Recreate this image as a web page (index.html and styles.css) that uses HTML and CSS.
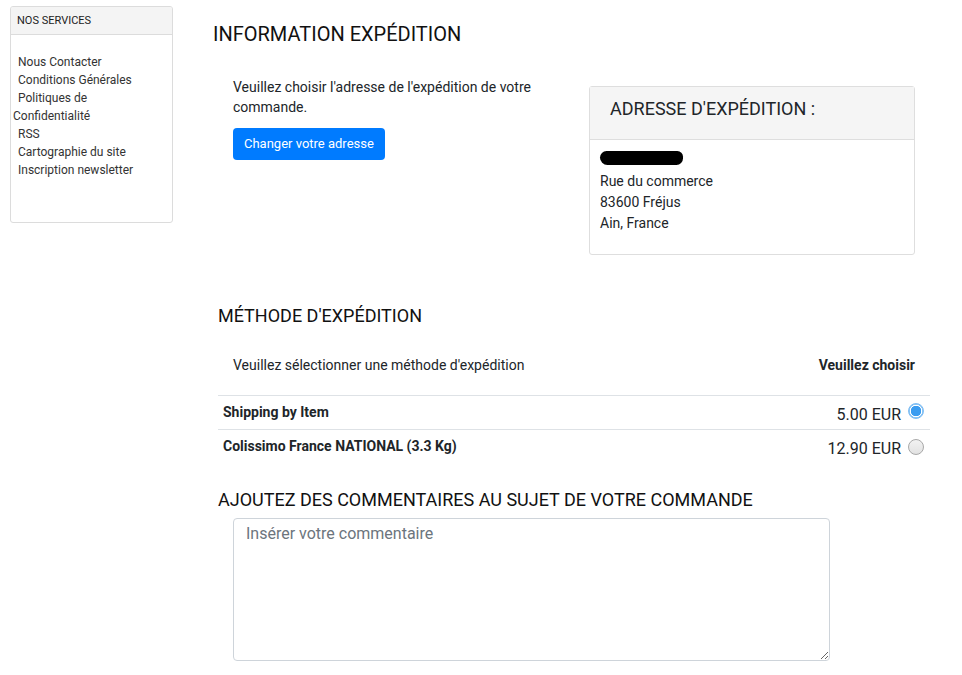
FILE: index.html
```html
<!DOCTYPE html>
<html lang="fr">
<head>
<meta charset="utf-8">
<title>Information expédition</title>
<link rel="stylesheet" href="styles.css">
</head>
<body>
<div class="page">
  <aside class="sidebar">
    <div class="side-card">
      <div class="side-head">NOS SERVICES</div>
      <ul class="side-list">
        <li><a href="#">Nous Contacter</a></li>
        <li><a href="#">Conditions Générales</a></li>
        <li><a href="#">Politiques de Confidentialité</a></li>
        <li><a href="#">RSS</a></li>
        <li><a href="#">Cartographie du site</a></li>
        <li><a href="#">Inscription newsletter</a></li>
      </ul>
    </div>
  </aside>
  <main class="main">
    <h2 class="title-lg">INFORMATION EXPÉDITION</h2>
    <div class="addr-row">
      <div class="addr-left">
        <p class="addr-text">Veuillez choisir l'adresse de l'expédition de votre commande.</p>
        <button class="btn" type="button">Changer votre adresse</button>
      </div>
      <div class="addr-card">
        <div class="addr-head">ADRESSE D'EXPÉDITION :</div>
        <div class="addr-body">
          <span class="redacted"></span>
          <div>Rue du commerce</div>
          <div>83600 Fréjus</div>
          <div>Ain, France</div>
        </div>
      </div>
    </div>

    <h3 class="title-md method-title">MÉTHODE D'EXPÉDITION</h3>
    <div class="ship-table">
      <div class="ship-head">
        <span class="ship-head-label">Veuillez sélectionner une méthode d'expédition</span>
        <span class="ship-head-choice">Veuillez choisir</span>
      </div>
      <label class="ship-row">
        <span class="ship-name">Shipping by Item</span>
        <span class="ship-price">5.00 EUR</span>
        <input class="radio" type="radio" name="ship" checked>
      </label>
      <label class="ship-row">
        <span class="ship-name">Colissimo France NATIONAL (3.3 Kg)</span>
        <span class="ship-price">12.90 EUR</span>
        <input class="radio" type="radio" name="ship">
      </label>
    </div>

    <h3 class="title-md comment-title">AJOUTEZ DES COMMENTAIRES AU SUJET DE VOTRE COMMANDE</h3>
    <textarea class="comment" placeholder="Insérer votre commentaire"></textarea>
  </main>
</div>
</body>
</html>
```
FILE: styles.css
```css
* { box-sizing: border-box; }
html, body { margin: 0; padding: 0; background: #fff; }
body {
  font-family: Roboto, "Liberation Sans", sans-serif;
  color: #212529;
  font-size: 14px;
}
.page {
  display: flex;
  align-items: flex-start;
}
.sidebar {
  width: 173px;
  padding: 6px 0 0 10px;
  flex: none;
}
.side-card {
  border: 1px solid #dcdcdc;
  border-radius: 3px;
  height: 217px;
  overflow: hidden;
}
.side-head {
  background: #f4f4f4;
  border-bottom: 1px solid #dcdcdc;
  font-size: 11px;
  color: #222;
  height: 28px;
  line-height: 27px;
  padding-left: 6px;
}
.side-list {
  list-style: none;
  margin: 0;
  padding: 18px 10px 0 2px;
}
.side-list li {
  font-size: 12px;
  line-height: 18px;
  text-indent: 5px;
}
.side-list a {
  color: #333;
  text-decoration: none;
}
.main {
  flex: 1;
  padding: 0 32px 0 40px;
}
.title-lg {
  font-size: 20px;
  font-weight: 400;
  color: #111;
  margin: 22px 0 0 0;
  line-height: 24px;
}
.addr-row {
  display: flex;
  align-items: flex-start;
  gap: 36px;
  margin-top: 31px;
}
.addr-left {
  width: 340px;
  padding-left: 20px;
}
.addr-text {
  margin: 0 0 11px 0;
  line-height: 20px;
  font-size: 14px;
  color: #212529;
}
.btn {
  background: #007bff;
  color: #fff;
  border: 0;
  border-radius: 4px;
  font-family: inherit;
  font-size: 13px;
  height: 32px;
  padding: 0 11px;
  line-height: 32px;
}
.addr-card {
  width: 326px;
  border: 1px solid #dedede;
  border-radius: 3px;
  margin-top: 9px;
  height: 169px;
}
.addr-head {
  background: #f5f5f5;
  border-bottom: 1px solid #dedede;
  height: 53px;
  font-size: 18px;
  color: #212529;
  padding: 11px 0 0 20px;
  line-height: 22px;
}
.addr-body {
  padding: 10px 10px 0 10px;
  font-size: 14px;
  line-height: 21px;
}
.redacted {
  display: block;
  width: 83px;
  height: 14px;
  margin: 1px 0 6px 0;
  background: #000;
  border-radius: 7px 6px 7px 8px;
}
.title-md {
  font-size: 18px;
  font-weight: 400;
  color: #111;
  margin: 0;
  line-height: 22px;
  padding-left: 5px;
}
.method-title {
  margin-top: 50px;
}
.ship-table {
  margin-top: 14px;
  width: 712px;
  margin-left: 5px;
}
.ship-head {
  display: flex;
  justify-content: space-between;
  align-items: center;
  height: 55px;
  border-bottom: 1px solid #dee2e6;
  padding: 0 15px 6px 15px;
}
.ship-head-choice {
  font-weight: 700;
}
.ship-row {
  display: flex;
  align-items: center;
  height: 34px;
  border-bottom: 1px solid #dee2e6;
  padding: 0 6px 0 5px;
}
.ship-row:last-child {
  border-bottom: 0;
}
.ship-name {
  font-weight: 700;
  flex: 1;
  padding-bottom: 2px;
}
.ship-price {
  font-size: 16px;
  padding-top: 3px;
}
.radio {
  appearance: none;
  -webkit-appearance: none;
  width: 16px;
  height: 16px;
  border-radius: 50%;
  margin: 0 0 0 7px;
  border: 1px solid #a8a8a8;
  background: linear-gradient(#f2f2f2, #e2e2e2);
  position: relative;
  top: 0;
}
.radio:checked {
  border: 1px solid #7dbcf3;
  background: radial-gradient(circle, #3a9cf0 0 5px, #fff 5.5px 6px, #8cc6f5 6.5px);
  top: -2px;
}
.comment-title {
  margin-top: 25px;
}
.comment {
  display: block;
  margin: 7px 0 0 20px;
  width: 597px;
  height: 143px;
  border: 1px solid #ced4da;
  border-radius: 4px;
  padding: 5px 12px;
  font-family: inherit;
  font-size: 16px;
  line-height: 20px;
  color: #495057;
}
.comment::placeholder {
  color: #6c757d;
}
```
